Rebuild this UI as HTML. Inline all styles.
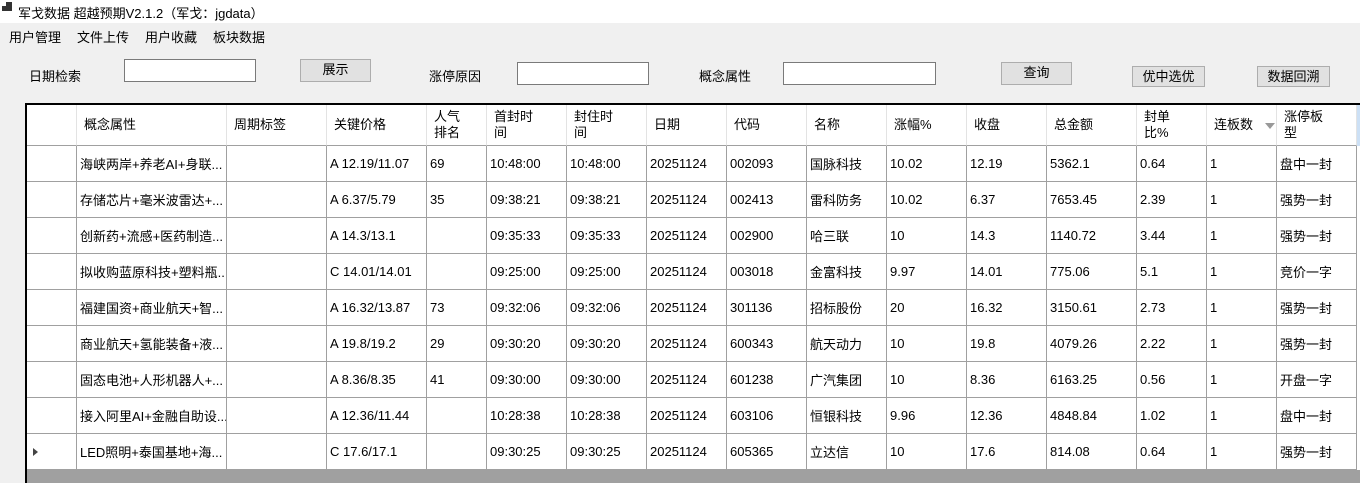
<!DOCTYPE html>
<html><head><meta charset="utf-8"><style>
*{margin:0;padding:0;box-sizing:border-box}
body{width:1360px;height:476px;overflow:hidden;background:#f0f0f0;font-family:"Liberation Sans","Noto Sans CJK SC",sans-serif;font-size:13px;color:#000;position:relative}
.a{position:absolute;white-space:nowrap}
.title{left:0;top:0;width:1360px;height:23px;background:#fff}
.btn{position:absolute;background:#e1e1e1;border:1px solid #adadad;text-align:center;font-size:13px;line-height:20px}
.inp{position:absolute;background:#fff;border:1px solid #7a7a7a;height:23px}
#grid{position:absolute;left:25px;top:103px;width:1340px;height:380px;border-top:2px solid #000;border-left:2px solid #000;background:#a0a0a0}
.r{display:flex;height:36px;background:#fff}
.r>div{flex:none;height:36px;border-right:1px solid #a0a0a0;border-bottom:1px solid #a0a0a0;padding-left:3px;white-space:nowrap;overflow:hidden;display:flex;align-items:center}
.r.h{height:41px}
.r.h>div{height:41px;border-right-color:#e3e3e3;padding-left:7px;line-height:16px}
.r>div:nth-child(1){width:50px}
.r>div:nth-child(2){width:150px}
.r>div:nth-child(3){width:100px}
.r>div:nth-child(4){width:100px}
.r>div:nth-child(5){width:60px}
.r>div:nth-child(6),.r>div:nth-child(7),.r>div:nth-child(8),.r>div:nth-child(9),.r>div:nth-child(10),.r>div:nth-child(11),.r>div:nth-child(12){width:80px}
.r>div:nth-child(13){width:90px}
.r>div:nth-child(14),.r>div:nth-child(15){width:70px}
.r>div:nth-child(16){width:80px}
.r>div:nth-child(17){width:20px;border:none}
.r.h>div:nth-child(17){background:#cce0f5}
</style></head><body>
<div class="a title"></div>
<div class="a" style="left:2px;top:6px;width:5px;height:5px;background:#333"></div>
<div class="a" style="left:6px;top:2px;width:6px;height:9px;background:#333"></div>
<div class="a" style="left:18px;top:3px;font-size:13px">军戈数据 超越预期V2.1.2（军戈：jgdata）</div>
<div class="a" style="left:9px;top:27px">用户管理</div>
<div class="a" style="left:77px;top:27px">文件上传</div>
<div class="a" style="left:145px;top:27px">用户收藏</div>
<div class="a" style="left:213px;top:27px">板块数据</div>
<div class="a" style="left:29px;top:66px">日期检索</div>
<div class="inp" style="left:124px;top:59px;width:132px"></div>
<div class="btn" style="left:300px;top:59px;width:71px;height:23px">展示</div>
<div class="a" style="left:429px;top:66px">涨停原因</div>
<div class="inp" style="left:517px;top:62px;width:132px"></div>
<div class="a" style="left:699px;top:66px">概念属性</div>
<div class="inp" style="left:783px;top:62px;width:153px"></div>
<div class="btn" style="left:1001px;top:62px;width:71px;height:23px">查询</div>
<div class="btn" style="left:1132px;top:66px;width:73px;height:21px">优中选优</div>
<div class="btn" style="left:1257px;top:66px;width:73px;height:21px">数据回溯</div>
<div id="grid">
<div class="r h"><div></div><div>概念属性</div><div>周期标签</div><div>关键价格</div><div>人气<br>排名</div><div>首封时<br>间</div><div>封住时<br>间</div><div>日期</div><div>代码</div><div>名称</div><div>涨幅%</div><div>收盘</div><div>总金额</div><div>封单<br>比%</div><div>连板数<span style="margin-left:12px;margin-top:2px;border:5px solid transparent;border-top:6px solid #999;border-bottom:0"></span></div><div>涨停板<br>型</div><div></div></div>
<div class="r"><div></div><div>海峡两岸+养老AI+身联...</div><div></div><div>A 12.19/11.07</div><div>69</div><div>10:48:00</div><div>10:48:00</div><div>20251124</div><div>002093</div><div>国脉科技</div><div>10.02</div><div>12.19</div><div>5362.1</div><div>0.64</div><div>1</div><div>盘中一封</div><div></div></div>
<div class="r"><div></div><div>存储芯片+毫米波雷达+...</div><div></div><div>A 6.37/5.79</div><div>35</div><div>09:38:21</div><div>09:38:21</div><div>20251124</div><div>002413</div><div>雷科防务</div><div>10.02</div><div>6.37</div><div>7653.45</div><div>2.39</div><div>1</div><div>强势一封</div><div></div></div>
<div class="r"><div></div><div>创新药+流感+医药制造...</div><div></div><div>A 14.3/13.1</div><div></div><div>09:35:33</div><div>09:35:33</div><div>20251124</div><div>002900</div><div>哈三联</div><div>10</div><div>14.3</div><div>1140.72</div><div>3.44</div><div>1</div><div>强势一封</div><div></div></div>
<div class="r"><div></div><div>拟收购蓝原科技+塑料瓶...</div><div></div><div>C 14.01/14.01</div><div></div><div>09:25:00</div><div>09:25:00</div><div>20251124</div><div>003018</div><div>金富科技</div><div>9.97</div><div>14.01</div><div>775.06</div><div>5.1</div><div>1</div><div>竞价一字</div><div></div></div>
<div class="r"><div></div><div>福建国资+商业航天+智...</div><div></div><div>A 16.32/13.87</div><div>73</div><div>09:32:06</div><div>09:32:06</div><div>20251124</div><div>301136</div><div>招标股份</div><div>20</div><div>16.32</div><div>3150.61</div><div>2.73</div><div>1</div><div>强势一封</div><div></div></div>
<div class="r"><div></div><div>商业航天+氢能装备+液...</div><div></div><div>A 19.8/19.2</div><div>29</div><div>09:30:20</div><div>09:30:20</div><div>20251124</div><div>600343</div><div>航天动力</div><div>10</div><div>19.8</div><div>4079.26</div><div>2.22</div><div>1</div><div>强势一封</div><div></div></div>
<div class="r"><div></div><div>固态电池+人形机器人+...</div><div></div><div>A 8.36/8.35</div><div>41</div><div>09:30:00</div><div>09:30:00</div><div>20251124</div><div>601238</div><div>广汽集团</div><div>10</div><div>8.36</div><div>6163.25</div><div>0.56</div><div>1</div><div>开盘一字</div><div></div></div>
<div class="r"><div></div><div>接入阿里AI+金融自助设...</div><div></div><div>A 12.36/11.44</div><div></div><div>10:28:38</div><div>10:28:38</div><div>20251124</div><div>603106</div><div>恒银科技</div><div>9.96</div><div>12.36</div><div>4848.84</div><div>1.02</div><div>1</div><div>盘中一封</div><div></div></div>
<div class="r"><div style="padding-left:6px"><span style="border:4px solid transparent;border-left:5px solid #444;border-right:0"></span></div><div>LED照明+泰国基地+海...</div><div></div><div>C 17.6/17.1</div><div></div><div>09:30:25</div><div>09:30:25</div><div>20251124</div><div>605365</div><div>立达信</div><div>10</div><div>17.6</div><div>814.08</div><div>0.64</div><div>1</div><div>强势一封</div><div></div></div>
</div>
</body></html>
